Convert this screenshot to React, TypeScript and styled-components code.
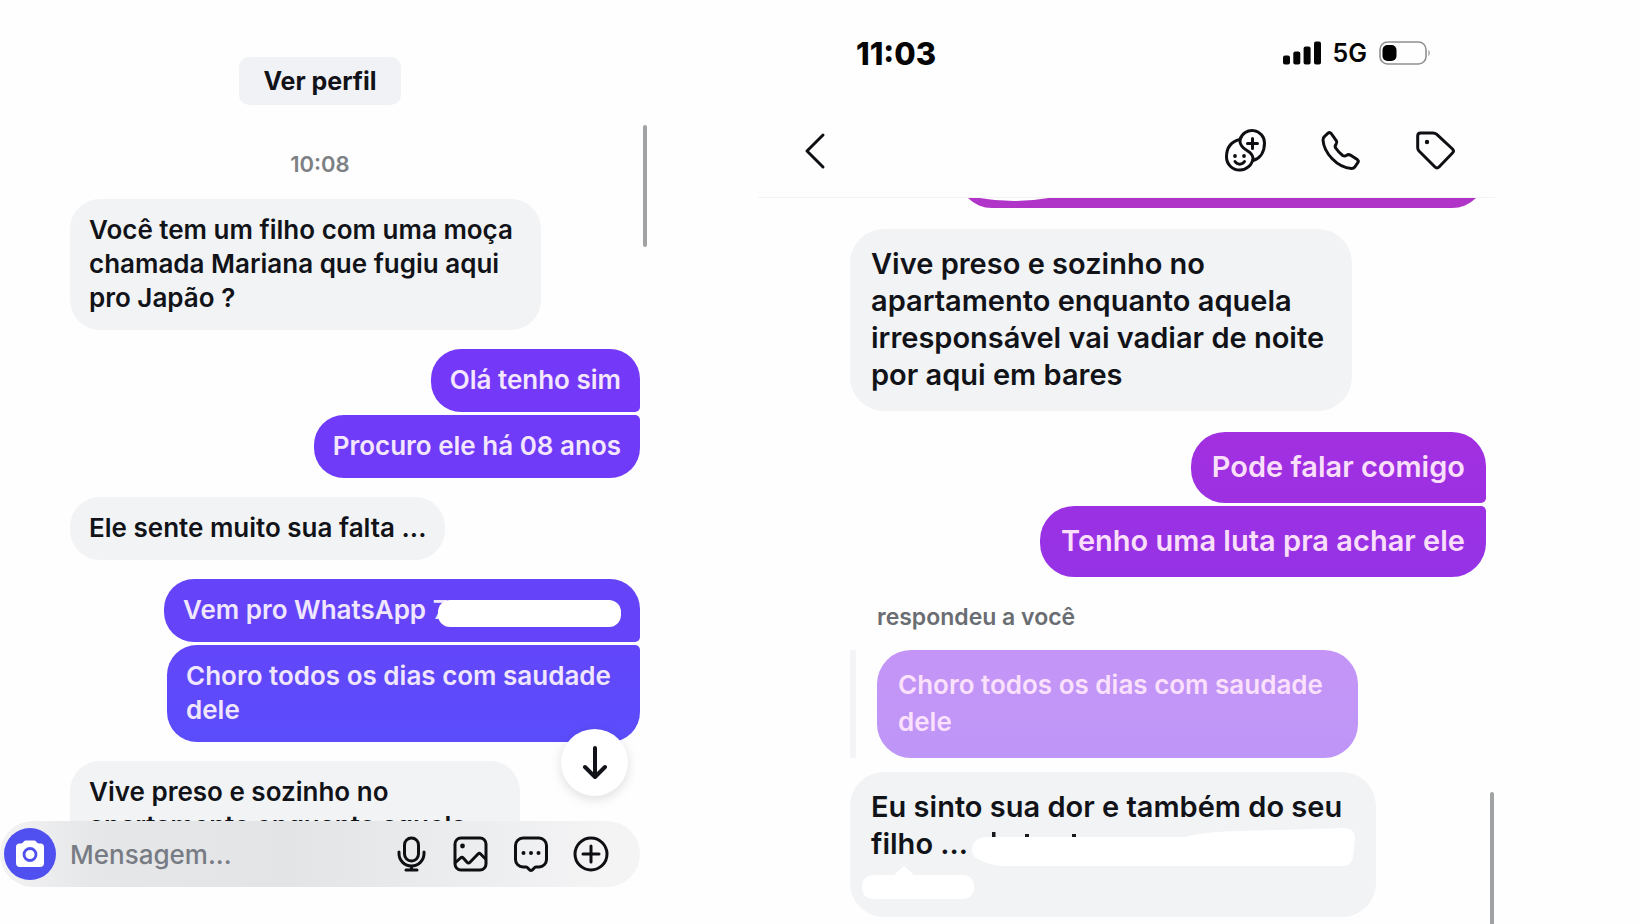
import React from 'react';
import styled, { createGlobalStyle, css } from 'styled-components';

const GlobalStyle = createGlobalStyle`
  *, *::before, *::after { box-sizing: border-box; }
  html, body { margin: 0; background: #fefefe; }
  body {
    font-family: Inter, 'Liberation Sans', sans-serif;
    font-weight: 600;
    color: #111318;
  }
  button, input { font: inherit; color: inherit; }
`;

const Page = styled.main`
  display: grid;
  grid-template-columns: minmax(0, 653fr) minmax(0, 105fr) minmax(0, 737fr) minmax(0, 145fr);
  height: 100vh;
  min-height: 600px;
  overflow: hidden;
`;

const LeftChat = styled.section`
  position: relative;
  grid-column: 1;
  display: flex;
  flex-direction: column;
  min-height: 0;
  padding: 57px 13px 37px 0;
`;

const RightChat = styled.section`
  position: relative;
  grid-column: 3;
  display: flex;
  flex-direction: column;
  min-height: 0;
`;

const ProfileButton = styled.button`
  align-self: center;
  height: 48px;
  padding: 0 24px;
  border: 0;
  border-radius: 10px;
  background: #f1f2f5;
  font-size: 25px;
  font-weight: 700;
`;

const TimeLabel = styled.time`
  align-self: center;
  margin: 45px 0 21px;
  font-size: 22px;
  line-height: 28px;
  color: #7d8084;
`;

const LeftFeed = styled.div`
  flex: 1;
  min-height: 0;
  overflow: hidden;
  display: flex;
  flex-direction: column;
  align-items: flex-start;
  padding-left: 70px;
  gap: 19px;
`;

const RightFeed = styled.div`
  flex: 1;
  min-height: 0;
  overflow: hidden;
  display: flex;
  flex-direction: column;
  align-items: flex-start;
  padding: 0 9px 0 92px;
  gap: 21px;
`;

const SentGroup = styled.div`
  align-self: flex-end;
  display: flex;
  flex-direction: column;
  align-items: flex-end;
  gap: 3px;
`;

type Join = 'top' | 'bottom';

const Bubble = styled.p<{ $size: 'm' | 'l'; $bg?: string; $ink?: string; $join?: Join; $width?: number }>`
  position: relative;
  flex: none;
  margin: 0;
  white-space: nowrap;
  max-width: 100%;
  ${p => p.$width && css`width: ${p.$width}px;`}
  background: ${p => p.$bg ?? '#f2f3f5'};
  color: ${p => p.$ink ?? '#111318'};
  ${p => p.$size === 'm'
    ? css`
        padding: 14px 19px 15px;
        border-radius: 30px;
        font-size: 26px;
        line-height: 34px;
      `
    : css`
        padding: 16px 21px 18px;
        border-radius: 34px;
        font-size: 29px;
        line-height: 37px;
      `}
  ${p => p.$join === 'bottom' && css`border-bottom-right-radius: 5px;`}
  ${p => p.$join === 'top' && css`border-top-right-radius: 5px;`}
`;

const QuotedBubble = styled(Bubble)`
  font-size: 26px;
`;

const Line = styled.span`
  display: block;
`;

const HiddenNumber = styled.span`
  position: absolute;
  right: 19px;
  top: 21px;
  width: 183px;
  height: 27px;
  border-radius: 12px;
  background: #fff;
`;

const Composer = styled.form`
  position: relative;
  flex: none;
  display: flex;
  align-items: center;
  height: 66px;
  padding: 0 32px 0 4px;
  border-radius: 33px;
  background: linear-gradient(90deg, #f3f3f4 0, #e6e7e9 14%, #e3e4e6 45%, #ebecee 70%, #f4f4f5 95%);
`;

const IconButton = styled.button`
  flex: none;
  display: flex;
  padding: 0;
  border: 0;
  background: none;
  color: #0e0f12;
  svg { overflow: visible; }
`;

const CameraButton = styled(IconButton)`
  align-items: center;
  justify-content: center;
  width: 52px;
  height: 52px;
  border-radius: 50%;
  background: #5050f0;
`;

const MessageInput = styled.input`
  flex: 1;
  min-width: 0;
  height: 40px;
  margin-left: 14px;
  padding: 0;
  border: 0;
  outline: 0;
  background: transparent;
  font-size: 26px;
  font-weight: 500;
  &::placeholder { color: #777b83; opacity: 1; }
`;

const Tools = styled.div`
  display: flex;
  gap: 26px;
`;

const ScrollDown = styled.button`
  position: absolute;
  right: 25px;
  bottom: 128px;
  display: flex;
  align-items: center;
  justify-content: center;
  width: 67px;
  height: 67px;
  padding: 0;
  border: 0;
  border-radius: 50%;
  background: #fff;
  box-shadow: 0 3px 12px rgba(0, 0, 0, 0.13);
`;

const ScrollThumb = styled.i<{ $top: number; $right: number; $height: number }>`
  position: absolute;
  top: ${p => p.$top}px;
  right: ${p => p.$right}px;
  width: 4px;
  height: ${p => p.$height}px;
  border-radius: 2px;
  background: #a1a2a3;
`;

const StatusBar = styled.div`
  flex: none;
  display: flex;
  align-items: center;
  justify-content: space-between;
  height: 106px;
  padding: 0 64px 0 98px;
  color: #050505;
`;

const Clock = styled.time`
  font-size: 31px;
  font-weight: 800;
`;

const StatusIcons = styled.div`
  display: flex;
  align-items: center;
  gap: 12px;
  font-size: 25px;
  line-height: 30px;
`;

const ChatHeader = styled.header`
  flex: none;
  display: flex;
  align-items: center;
  justify-content: space-between;
  height: 92px;
  padding: 0 38px 2px 45px;
  border-bottom: 1px solid #f3f3f4;
`;

const HeaderActions = styled.nav`
  display: flex;
  gap: 53px;
`;

const ScrolledBubble = styled.div`
  position: relative;
  flex: none;
  align-self: flex-end;
  width: 528px;
  height: 71px;
  margin-top: -61px;
  border-radius: 34px;
  background: #b034c8;
`;

const BrushMark = styled.svg`
  position: absolute;
  left: 16px;
  bottom: 5px;
`;

const ReplyBlock = styled.div`
  display: flex;
  flex-direction: column;
  align-items: flex-start;
  margin-top: 4px;
`;

const ReplyLabel = styled.span`
  margin: 0 0 18px 27px;
  font-size: 23px;
  line-height: 30px;
  color: #6a6d72;
`;

const Quote = styled.div`
  padding-left: 21px;
  margin-bottom: 14px;
  border-left: 6px solid #f4f4f6;
`;

const Redaction = styled.svg`
  position: absolute;
  left: 0;
  top: 0;
`;

const stroke = {
  fill: 'none',
  stroke: 'currentColor',
  strokeWidth: 3,
  strokeLinecap: 'round' as const,
  strokeLinejoin: 'round' as const,
};

const CameraIcon = () => (
  <svg width="30" height="30" viewBox="0 0 30 30">
    <path fill="#fff" d="M10.500 1.500h9c2 0 2 3 4.500 3h1.500a3.500 3.500 0 0 1 3.500 3.500v16a4 4 0 0 1-4 4H5a4 4 0 0 1-4-4V8a3.500 3.500 0 0 1 3.500-3.500H6c2.500 0 2.500-3 4.500-3z" />
    <circle cx="15" cy="15.500" r="6" fill="none" stroke="#5050f0" strokeWidth="2.800" />
  </svg>
);

const MicIcon = () => (
  <svg width="34" height="36" viewBox="0 0 34 36" {...stroke}>
    <rect x="10.500" y="2" width="14" height="23" rx="7" />
    <path d="M5 16v1.500a12.500 12.500 0 0 0 25 0V16M17.500 30v4M12 34h11" />
  </svg>
);

const PictureIcon = () => (
  <svg width="34" height="36" viewBox="0 0 34 36" {...stroke}>
    <rect x="1" y="2" width="31" height="32" rx="6" />
    <circle cx="8.500" cy="10" r="2.400" fill="currentColor" stroke="none" />
    <path d="M1.500 26.500l5-4.500q1.500-1.300 3 .2l3.500 4q1.500 1.500 3 0L24 18q1.300-1.300 2.600 0l5 5" />
  </svg>
);

const StickerIcon = () => (
  <svg width="34" height="36" viewBox="0 0 34 36" {...stroke}>
    <path d="M9 2h16a7.500 7.500 0 0 1 7.500 7.500v14a7.500 7.500 0 0 1-7.500 7.500h-3c-2 0-3 3.500-5 3.500S14 31 12 31H9a7.500 7.500 0 0 1-7.500-7.500v-14A7.500 7.500 0 0 1 9 2z" />
    <g fill="currentColor" stroke="none">
      <circle cx="9.500" cy="17" r="2" />
      <circle cx="17" cy="17" r="2" />
      <circle cx="24.500" cy="17" r="2" />
    </g>
  </svg>
);

const PlusIcon = () => (
  <svg width="34" height="36" viewBox="0 0 34 36" {...stroke}>
    <circle cx="17" cy="18" r="16" />
    <path d="M17 10v16M9 18h16" />
  </svg>
);

const ArrowDownIcon = () => (
  <svg width="26" height="36" viewBox="0 0 26 36" {...stroke} strokeWidth={4}>
    <path d="M13 3v29M3 22l10 10 10-10" />
  </svg>
);

const BackIcon = () => (
  <svg width="24" height="38" viewBox="0 0 24 38" {...stroke}>
    <path d="M20 3L4 19l16 16" />
  </svg>
);

const AddFriendIcon = () => (
  <svg width="42" height="42" viewBox="0 0 42 42" {...stroke}>
    <path d="M15 9.500A12.500 12.500 0 0 1 39.500 13C39.500 22 35 28.500 28 30.500" />
    <path d="M15 9.500C6 11.500 1.500 18 1.500 27A13 13 0 0 0 14.500 40 13 13 0 0 0 28 28C27.500 24.500 25.500 22.500 22 20.500 17.500 18 14.500 14.500 15 9.500z" />
    <path d="M27.500 8.500v10M22.500 13.500h10" />
    <path d="M10 31.500c2.500 3.500 7 3.500 9.500 0" />
    <g fill="currentColor" stroke="none">
      <circle cx="10" cy="26" r="1.900" />
      <circle cx="19" cy="26" r="1.900" />
    </g>
  </svg>
);

const PhoneIcon = () => (
  <svg width="42" height="42" viewBox="0 0 42 42" {...stroke}>
    <path d="M4.500 6.500L8 3.200q1.700-1.400 3.200.3l5.200 7.300q1 1.600-.2 3.200-1.800 2.200-.5 4 3 4.500 7 7.500 1.800 1.200 4-.2 1.800-1.200 3.600-.2l7 4.500q1.700 1.300.5 3l-3 4.400q-1.300 1.600-3.300 1.500C17 37.500 4 23 3 10q-.1-2.200 1.500-3.500z" />
  </svg>
);

const TagIcon = () => (
  <svg width="42" height="42" viewBox="0 0 42 42" {...stroke}>
    <path d="M5.500 3h12.500q2 0 3.500 1.200L37.500 19q2 2 .2 3.800L24 37q-2 2-4 0L4 21q-1.300-1.400-1.300-3.300V6q0-3 2.800-3z" />
    <circle cx="12" cy="12" r="2.200" fill="currentColor" stroke="none" />
  </svg>
);

const SignalIcon = () => (
  <svg width="38" height="24" viewBox="0 0 38 24" fill="currentColor">
    <rect x="0" y="14.500" width="7" height="9" rx="2" />
    <rect x="10.300" y="10.500" width="7" height="13" rx="2" />
    <rect x="20.600" y="5.500" width="7" height="18" rx="2" />
    <rect x="31" y="0.500" width="7" height="23" rx="2" />
  </svg>
);

const BatteryIcon = () => (
  <svg width="52" height="24" viewBox="0 0 52 24">
    <rect x="1" y="1" width="46" height="22" rx="7.500" fill="none" stroke="#8f9092" strokeWidth="1.600" />
    <rect x="3.500" y="4" width="14" height="16" rx="5" fill="#000" />
    <path d="M49.500 8.500q2.500 3.500 0 7z" fill="#8f9092" />
  </svg>
);

export default function App() {
  return (
    <>
      <GlobalStyle />
      <Page>
        <LeftChat>
          <ProfileButton type="button">Ver perfil</ProfileButton>
          <TimeLabel>10:08</TimeLabel>
          <LeftFeed>
            <Bubble $size="m" $width={471}>
              <Line>Você tem um filho com uma moça</Line>
              <Line>chamada Mariana que fugiu aqui</Line>
              <Line>pro Japão ?</Line>
            </Bubble>
            <SentGroup>
              <Bubble $size="m" $bg="#7439f8" $ink="#f3e6fd" $join="bottom">Olá tenho sim</Bubble>
              <Bubble $size="m" $bg="#6f3bf8" $ink="#f3e6fd" $join="top">Procuro ele há 08 anos</Bubble>
            </SentGroup>
            <Bubble $size="m">Ele sente muito sua falta ...</Bubble>
            <SentGroup>
              <Bubble $size="m" $bg="#6543f9" $ink="#f0e6fd" $join="bottom" $width={476}>
                Vem pro WhatsApp 7
                <HiddenNumber />
              </Bubble>
              <Bubble $size="m" $bg="linear-gradient(#6246fa, #5b4dfb)" $ink="#f0e6fd" $join="top" $width={473}>
                <Line>Choro todos os dias com saudade</Line>
                <Line>dele</Line>
              </Bubble>
            </SentGroup>
            <Bubble $size="m" $width={450}>
              <Line>Vive preso e sozinho no</Line>
              <Line>apartamento enquanto aquela</Line>
            </Bubble>
          </LeftFeed>
          <Composer onSubmit={e => e.preventDefault()}>
            <CameraButton type="button" aria-label="Câmera"><CameraIcon /></CameraButton>
            <MessageInput aria-label="Mensagem" placeholder="Mensagem..." />
            <Tools>
              <IconButton type="button" aria-label="Gravar áudio"><MicIcon /></IconButton>
              <IconButton type="button" aria-label="Galeria"><PictureIcon /></IconButton>
              <IconButton type="button" aria-label="Figurinhas"><StickerIcon /></IconButton>
              <IconButton type="button" aria-label="Mais opções"><PlusIcon /></IconButton>
            </Tools>
          </Composer>
          <ScrollDown type="button" aria-label="Ir para o fim"><ArrowDownIcon /></ScrollDown>
          <ScrollThumb $top={125} $right={6} $height={122} />
        </LeftChat>

        <RightChat>
          <StatusBar>
            <Clock>11:03</Clock>
            <StatusIcons>
              <SignalIcon />
              <span>5G</span>
              <BatteryIcon />
            </StatusIcons>
          </StatusBar>
          <ChatHeader>
            <IconButton type="button" aria-label="Voltar"><BackIcon /></IconButton>
            <HeaderActions>
              <IconButton type="button" aria-label="Adicionar pessoas"><AddFriendIcon /></IconButton>
              <IconButton type="button" aria-label="Ligar"><PhoneIcon /></IconButton>
              <IconButton type="button" aria-label="Etiquetas"><TagIcon /></IconButton>
            </HeaderActions>
          </ChatHeader>
          <RightFeed>
            <ScrolledBubble>
              <BrushMark width="80" height="6" viewBox="0 0 80 6">
                <path d="M0 0Q40 8 80 0z" fill="#fefefe" />
              </BrushMark>
            </ScrolledBubble>
            <Bubble $size="l" $width={502}>
              <Line>Vive preso e sozinho no</Line>
              <Line>apartamento enquanto aquela</Line>
              <Line>irresponsável vai vadiar de noite</Line>
              <Line>por aqui em bares</Line>
            </Bubble>
            <SentGroup>
              <Bubble $size="l" $bg="linear-gradient(#a22fe0, #9c31e2)" $ink="#fadffa" $join="bottom">Pode falar comigo</Bubble>
              <Bubble $size="l" $bg="linear-gradient(#9b31e3, #9632e6)" $ink="#fadffa" $join="top">Tenho uma luta pra achar ele</Bubble>
            </SentGroup>
            <ReplyBlock>
              <ReplyLabel>respondeu a você</ReplyLabel>
              <Quote>
                <QuotedBubble $size="l" $bg="linear-gradient(#c495f7, #be96f7)" $ink="#fbe1fb" $width={481}>
                  <Line>Choro todos os dias com saudade</Line>
                  <Line>dele</Line>
                </QuotedBubble>
              </Quote>
              <Bubble $size="l" $width={526}>
                <Line>Eu sinto sua dor e também do seu</Line>
                <Line>filho ...</Line>
                <Line>&nbsp;</Line>
                <Redaction width="526" height="145" viewBox="0 0 526 145">
                  <g fill="#16181c">
                    <rect x="142" y="60" width="3.500" height="8" />
                    <rect x="175" y="62" width="4" height="3.500" />
                    <rect x="222" y="62" width="4" height="5" />
                    <path opacity=".35" d="M237 65h6v2h-6zM249 65h3v2h-3zM258 65h3v2h-3zM276 65h9v2h-9zM294 65h7v2h-7zM317 65h8v2h-8z" />
                  </g>
                  <path fill="#fff" d="M122 79Q122 65 138 65L335 65Q352 60 390 59L494 56Q505 56 505 67L503 85Q502 94 492 94L150 94Q122 89 122 79z" />
                  <path fill="#fff" d="M24 103H44L54 94L64 103H112Q124 103 124 115Q124 127 112 127H24Q12 127 12 115Q12 103 24 103z" />
                </Redaction>
              </Bubble>
            </ReplyBlock>
          </RightFeed>
          <ScrollThumb $top={792} $right={1} $height={160} />
        </RightChat>
      </Page>
    </>
  );
}
